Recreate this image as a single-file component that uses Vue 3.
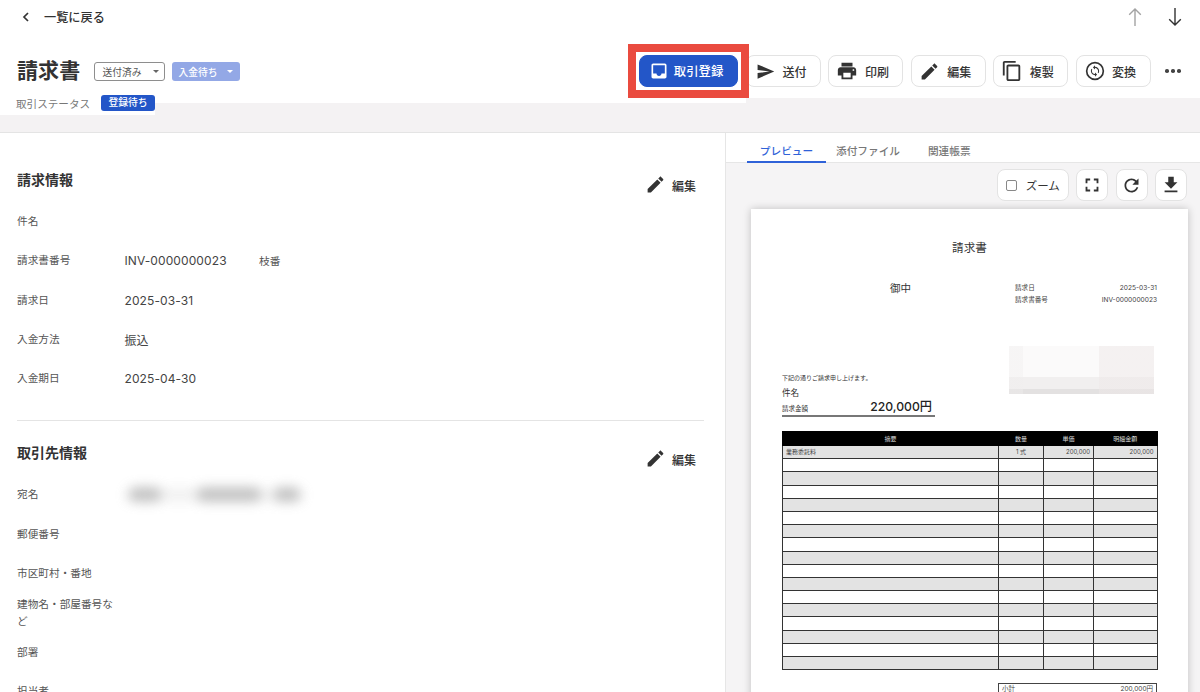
<script setup>
const actions = [
  { label: '送付', size: 19, d: 'M2.01 21L23 12 2.01 3 2 10l15 2-15 2z' },
  { label: '印刷', size: 22, d: 'M19 8H5c-1.66 0-3 1.34-3 3v6h4v4h12v-4h4v-6c0-1.66-1.34-3-3-3zm-3 11H8v-5h8v5zm3-7c-.55 0-1-.45-1-1s.45-1 1-1 1 .45 1 1-.45 1-1 1zm-1-9H6v4h12V3z' },
  { label: '編集', size: 21, d: 'M3 17.25V21h3.75L17.81 9.94l-3.75-3.75L3 17.25zM20.71 7.04c.39-.39.39-1.02 0-1.41l-2.34-2.34c-.39-.39-1.02-.39-1.41 0l-1.83 1.83 3.75 3.75 1.83-1.83z' },
  { label: '複製', size: 22, d: 'M16 1H4c-1.1 0-2 .9-2 2v14h2V3h12V1zm3 4H8c-1.1 0-2 .9-2 2v14c0 1.1.9 2 2 2h11c1.1 0 2-.9 2-2V7c0-1.1-.9-2-2-2zm0 16H8V7h11v14z' }
]
const editIcon = actions[2].d
const billing = [
  { label: '件名', value: '' },
  { label: '請求書番号', value: 'INV-0000000023', extra: '枝番' },
  { label: '請求日', value: '2025-03-31' },
  { label: '入金方法', value: '振込' },
  { label: '入金期日', value: '2025-04-30' }
]
const partner = [
  { label: '宛名', blur: true },
  { label: '郵便番号' },
  { label: '市区町村・番地' },
  { label: '建物名・部屋番号など' },
  { label: '部署' },
  { label: '担当者' }
]
const rows = Array.from({ length: 17 }, (_, i) =>
  i === 0
    ? { name: '業務委託料', qty: '1 式', price: '200,000', total: '200,000' }
    : { name: '', qty: '', price: '', total: '' }
)
</script>

<template>
  <div class="app">
    <div class="top">
      <div class="white white-main"></div>
      <div class="white white-mid"></div>
      <div class="white white-left"></div>
      <div class="top-inner">
        <div class="nav">
          <div class="back">
            <svg class="chev" viewBox="0 0 8 10" width="8" height="10"><path d="M6 1L2 5l4 4" fill="none" stroke="#333" stroke-width="1.7" /></svg>
            <span>一覧に戻る</span>
          </div>
          <div class="arrows">
            <svg viewBox="0 0 14 20" width="14" height="20"><path d="M7 19V2M1.2 7.8L7 2l5.8 5.8" fill="none" stroke="#a3a3a3" stroke-width="1.4" /></svg>
            <svg viewBox="0 0 14 20" width="14" height="20"><path d="M7 1v17M1.2 12.2L7 18l5.8-5.8" fill="none" stroke="#333" stroke-width="1.4" /></svg>
          </div>
        </div>
        <div class="title-row">
          <h1>請求書</h1>
          <div class="chip chip-outline">送付済み<i class="caret"></i></div>
          <div class="chip chip-light">入金待ち<i class="caret caret-white"></i></div>
          <div class="actions">
            <button class="btn primary">
              <svg viewBox="0 0 24 24" width="20" height="20"><path fill="#fff" d="M19 3H4.99c-1.11 0-1.98.89-1.98 2L3 19c0 1.1.88 2 1.99 2H19c1.1 0 2-.9 2-2V5c0-1.11-.9-2-2-2zm0 12h-4c0 1.66-1.35 3-3 3s-3-1.34-3-3H4.99V5H19v10z" /></svg>
              <span>取引登録</span>
            </button>
            <button v-for="a in actions" :key="a.label" class="btn">
              <span class="ico"><svg viewBox="0 0 24 24" :width="a.size" :height="a.size"><path fill="#333" :d="a.d" /></svg></span>
              <span>{{ a.label }}</span>
            </button>
            <button class="btn">
              <span class="ico">
                <svg viewBox="0 0 24 24" width="20" height="20">
                  <circle cx="12" cy="12" r="10" fill="none" stroke="#333" stroke-width="2" />
                  <path fill="#333" transform="translate(12 12) scale(.62) translate(-12 -12)" d="M12 4V1L8 5l4 4V6c3.31 0 6 2.69 6 6 0 1.01-.25 1.97-.7 2.8l1.46 1.46C19.54 15.03 20 13.57 20 12c0-4.42-3.58-8-8-8zm0 14c-3.31 0-6-2.69-6-6 0-1.01.25-1.97.7-2.8L5.24 7.74C4.46 8.97 4 10.43 4 12c0 4.42 3.58 8 8 8v3l4-4-4-4v3z" />
                </svg>
              </span>
              <span>変換</span>
            </button>
            <div class="more"><i></i><i></i><i></i></div>
          </div>
        </div>
        <div class="status-row">
          <span class="status-label">取引ステータス</span>
          <span class="chip-status">登録待ち</span>
        </div>
      </div>
    </div>

    <div class="main">
      <div class="left">
        <section class="sec first">
          <div class="sec-head">
            <h2>請求情報</h2>
            <div class="edit"><svg viewBox="0 0 24 24" width="21" height="21"><path fill="#333" :d="editIcon" /></svg><span>編集</span></div>
          </div>
          <div v-for="r in billing" :key="r.label" class="row">
            <div class="label">{{ r.label }}</div>
            <div class="value">{{ r.value }}</div>
            <div v-if="r.extra" class="extra">{{ r.extra }}</div>
          </div>
        </section>
        <section class="sec second">
          <div class="sec-head">
            <h2>取引先情報</h2>
            <div class="edit"><svg viewBox="0 0 24 24" width="21" height="21"><path fill="#333" :d="editIcon" /></svg><span>編集</span></div>
          </div>
          <div v-for="r in partner" :key="r.label" class="row">
            <div class="label">{{ r.label }}</div>
            <div v-if="r.blur" class="blur"><i class="b1"></i><i class="b2"></i><i class="b3"></i></div>
          </div>
        </section>
      </div>

      <div class="right">
        <div class="tabs">
          <div class="tab active">プレビュー</div>
          <div class="tab t2">添付ファイル</div>
          <div class="tab t3">関連帳票</div>
        </div>
        <div class="tools">
          <div class="tool zoom"><i class="check"></i><span>ズーム</span></div>
          <div class="tool sq"><svg viewBox="0 0 24 24" width="22" height="22"><path fill="#333" d="M7 14H5v5h5v-2H7v-3zm-2-4h2V7h3V5H5v5zm12 7h-3v2h5v-5h-2v3zM14 5v2h3v3h2V5h-5z" /></svg></div>
          <div class="tool sq"><svg viewBox="0 0 24 24" width="21" height="21"><path fill="#333" d="M17.65 6.35C16.2 4.9 14.21 4 12 4c-4.42 0-7.99 3.58-7.99 8s3.57 8 7.99 8c3.73 0 6.84-2.55 7.73-6h-2.08c-.82 2.33-3.04 4-5.65 4-3.31 0-6-2.69-6-6s2.69-6 6-6c1.66 0 3.14.69 4.22 1.78L13 11h7V4l-2.35 2.35z" /></svg></div>
          <div class="tool sq"><svg viewBox="0 0 24 24" width="22" height="22"><path fill="#333" d="M19 9h-4V3H9v6H5l7 7 7-7zM5 18v2h14v-2H5z" /></svg></div>
        </div>
        <div class="paper">
          <div class="doc-title">請求書</div>
          <div class="doc-head">
            <div class="goch">御中</div>
            <div class="doc-info">
              <div class="info-row"><span>請求日</span><span>2025-03-31</span></div>
              <div class="info-row"><span>請求書番号</span><span>INV-0000000023</span></div>
            </div>
          </div>
          <div class="doc-mid">
            <div class="doc-lead">
              <div class="msg">下記の通りご請求申し上げます。</div>
              <div class="subject">件名</div>
              <div class="amount"><span class="amount-l">請求金額</span><span class="amount-v">220,000円</span></div>
            </div>
            <div class="logo"></div>
          </div>
          <table class="items">
            <colgroup><col class="c1" /><col class="c2" /><col class="c3" /><col class="c4" /></colgroup>
            <thead><tr><th>摘要</th><th>数量</th><th>単価</th><th>明細金額</th></tr></thead>
            <tbody>
              <tr v-for="(r, i) in rows" :key="i" :class="{ odd: i % 2 === 0 }">
                <td class="l">{{ r.name }}</td><td class="c">{{ r.qty }}</td><td class="r">{{ r.price }}</td><td class="r">{{ r.total }}</td>
              </tr>
            </tbody>
          </table>
          <div class="summary"><span>小計</span><span>200,000円</span></div>
        </div>
      </div>
    </div>
  </div>
</template>

<style>
html, body { margin: 0; overflow: hidden; background: #fff; }
</style>

<style scoped>
.app {
  width: 1200px;
  height: 692px;
  overflow: hidden;
  display: flex;
  flex-direction: column;
  font-family: Inter, "Noto Sans CJK JP", sans-serif;
  color: #333;
  background: #fff;
}
.top {
  position: relative;
  height: 132px;
  flex: none;
  background: #f4f2f3;
  border-bottom: 1px solid #e4e4e4;
}
.white { position: absolute; left: 0; background: #fff; }
.white-main { top: 0; width: 100%; height: 98px; }
.white-mid { top: 98px; width: 746px; height: 5px; }
.white-left { top: 103px; width: 155px; height: 12px; }
.top-inner { position: relative; }
.nav {
  height: 34px;
  display: flex;
  align-items: center;
  justify-content: space-between;
  padding: 0 18px 0 22px;
  box-sizing: border-box;
}
.back { display: flex; align-items: center; gap: 14px; font-size: 12.2px; font-weight: 500; }
.arrows { display: flex; gap: 26px; }
.arrows svg { display: block; }
.title-row {
  margin-top: 21px;
  height: 32px;
  display: flex;
  align-items: center;
  padding-left: 17px;
}
h1 { width: 63px; margin: 0 13.5px 0 0; font-size: 21px; font-weight: 700; line-height: 32px; letter-spacing: .1px; white-space: nowrap; }
.chip {
  height: 19px;
  box-sizing: border-box;
  display: flex;
  align-items: center;
  justify-content: space-between;
  font-size: 9.75px;
  border-radius: 3px;
  margin-top: 1px;
}
.chip-outline { width: 71px; padding: 0 5px 0 8px; border: 1px solid #8e8e8e; color: #555; margin-right: 7px; }
.chip-light { width: 68px; padding: 0 7px; background: #93a8e6; color: #fff; font-weight: 500; }
.caret { width: 0; height: 0; border: 3px solid transparent; border-top-color: #666; border-bottom: 0; }
.caret-white { border-top-color: #fff; }
.actions { margin-left: auto; display: flex; align-items: center; gap: 7.4px; padding-right: 12px; }
.btn {
  width: 75px;
  height: 32px;
  padding: 0 0 0 7px;
  box-sizing: border-box;
  display: flex;
  align-items: center;
  gap: 6.5px;
  background: #fff;
  border: 1px solid #e3e3e3;
  border-radius: 8px;
  font: 500 12px Inter, "Noto Sans CJK JP", sans-serif;
  color: #333;
}
.ico { width: 22px; height: 22px; display: flex; align-items: center; justify-content: center; }
.ico svg { display: block; }
.btn.primary {
  position: relative;
  width: 99px;
  margin-right: .9px;
  padding-left: 9px;
  gap: 5px;
  background: #2356c8;
  border-color: #2356c8;
  color: #fff;
  font-size: 12.4px;
  z-index: 1;
}
.btn.primary::before {
  content: "";
  position: absolute;
  inset: -12px -12px -12px -11.5px;
  box-sizing: border-box;
  border: 8px solid #ea4b3f;
  pointer-events: none;
}
.more { width: 30px; display: flex; justify-content: center; gap: 2.5px; }
.more i { width: 3.5px; height: 3.5px; border-radius: 50%; background: #444; }
.status-row {
  margin-top: 8px;
  height: 16px;
  display: flex;
  align-items: center;
  padding-left: 16px;
}
.status-label { font-size: 10.6px; color: #777; width: 85px; }
.chip-status {
  width: 54px;
  height: 15.5px;
  line-height: 15.5px;
  text-align: center;
  border-radius: 3px;
  background: #2356c8;
  color: #fff;
  font-size: 9.8px;
  font-weight: 500;
}
.main { flex: 1; min-height: 0; display: flex; }
.left { width: 726px; flex: none; box-sizing: border-box; border-right: 1px solid #e6e6e6; }
.sec { margin: 0 21px 0 17px; }
.first { height: 288px; border-bottom: 1px solid #e4e4e4; box-sizing: border-box; }
.sec-head { display: flex; justify-content: space-between; align-items: flex-start; }
.first .sec-head { height: 68.6px; padding-top: 37px; box-sizing: border-box; }
.second .sec-head { height: 54px; padding-top: 22px; box-sizing: border-box; }
.second .edit { margin-top: 6px; }
h2 { margin: 0; font-size: 14px; line-height: 20px; font-weight: 700; color: #333; }
.edit { display: flex; align-items: center; gap: 6px; font-size: 12px; font-weight: 500; padding-right: 8px; margin-top: 5px; }
.edit svg { display: block; margin-top: -1px; }
.row { min-height: 39.4px; display: flex; align-items: center; }
.label { width: 107.5px; flex: none; font-size: 10.67px; line-height: 17px; color: #555; padding-right: 9px; box-sizing: border-box; }
.value { width: 134.5px; font-size: 12px; color: #444; letter-spacing: .1px; }
.extra { font-size: 10.67px; color: #555; }
.blur { display: flex; align-items: center; filter: blur(6px); opacity: .7; background: rgba(190, 190, 190, .3); height: 14px; border-radius: 7px; padding: 0 4px; }
.blur i { display: block; height: 15px; background: #aaa; border-radius: 7px; }
.b1 { width: 32px; margin-right: 36px; }
.b2 { width: 64px; margin-right: 13px; }
.b3 { width: 26px; }
.right { flex: 1; min-width: 0; background: #f5f4f5; }
.tabs {
  height: 30px;
  box-sizing: border-box;
  background: #fff;
  border-bottom: 1px solid #e6e6e6;
  padding-left: 21px;
  display: flex;
}
.tab { font-size: 10.67px; line-height: 37px; height: 30px; color: #777; font-weight: 500; }
.tab.active { width: 79px; box-sizing: border-box; text-align: center; color: #2f62d8; border-bottom: 2px solid #2f62d8; }
.t2 { margin-left: 10px; }
.t3 { margin-left: 28px; }
.tools { display: flex; justify-content: flex-end; gap: 7.5px; padding: 6px 13px 0 0; }
.tool {
  height: 32px;
  box-sizing: border-box;
  display: flex;
  align-items: center;
  justify-content: center;
  background: #fff;
  border: 1px solid #e3e3e3;
  border-radius: 8px;
}
.tool svg { display: block; }
.zoom { width: 71.5px; gap: 9px; font-size: 11.5px; }
.check { width: 9px; height: 9px; border: 1px solid #888; border-radius: 2px; }
.sq { width: 32px; }
.paper {
  margin: 8px 0 0 25px;
  width: 437px;
  height: 520px;
  box-sizing: border-box;
  padding: 32px 31px 0;
  background: #fff;
  box-shadow: 0 0 8px rgba(0, 0, 0, .22);
}
.doc-title { text-align: center; font-size: 11.6px; line-height: 14px; }
.doc-head { margin-top: 27px; display: flex; justify-content: space-between; }
.goch { margin: 0 0 0 108px; font-size: 10.5px; line-height: 14px; }
.doc-info { width: 142px; font-size: 6.6px; color: #444; }
.info-row { display: flex; justify-content: space-between; line-height: 12px; }
.doc-mid { margin-top: 40px; display: flex; align-items: flex-start; justify-content: space-between; }
.doc-lead { width: 153px; padding-top: 26px; }
.msg { font-size: 6px; line-height: 12px; white-space: nowrap; }
.subject { font-size: 8.6px; line-height: 14px; margin-top: 2px; }
.amount { height: 15px; display: flex; justify-content: space-between; align-items: flex-end; border-bottom: 2px solid #777; padding-right: 3px; }
.amount-l { font-size: 6.5px; line-height: 12px; }
.amount-v { font-size: 12.2px; line-height: 16px; font-weight: 500; color: #222; }
.logo {
  width: 145px;
  height: 48px;
  margin-right: 3px;
  background:
    linear-gradient(90deg, rgba(240, 238, 238, .4) 0 10%, transparent 10% 62%, rgba(238, 232, 232, .5) 62% 100%),
    linear-gradient(180deg, #fbfafa 0 65%, #f1efef 65% 90%, #e3e1e1 90% 100%);
}
.items { width: 374.5px; margin-top: 14px; table-layout: fixed; border-collapse: collapse; font-size: 6px; }
.c1 { width: 216px; }
.c2 { width: 45px; }
.c3 { width: 50px; }
.c4 { width: 63.5px; }
.items th { height: 13px; padding: 0; background: #000; color: #ddd; font-weight: 400; border: 1px solid #000; }
.items td { height: 13.2px; padding: 0 3px; border: 1px solid #333; color: #444; box-sizing: border-box; line-height: 1; }
.items tr.odd td { background: #e3e3e3; }
.items .l { text-align: left; }
.items .c { text-align: center; }
.items .r { text-align: right; }
.summary {
  margin: 13px 0 0 216px;
  height: 30px;
  box-sizing: border-box;
  border: 1px solid #444;
  padding: 0 3px;
  display: flex;
  justify-content: space-between;
  font-size: 6.5px;
  line-height: 11px;
  color: #444;
}
</style>
